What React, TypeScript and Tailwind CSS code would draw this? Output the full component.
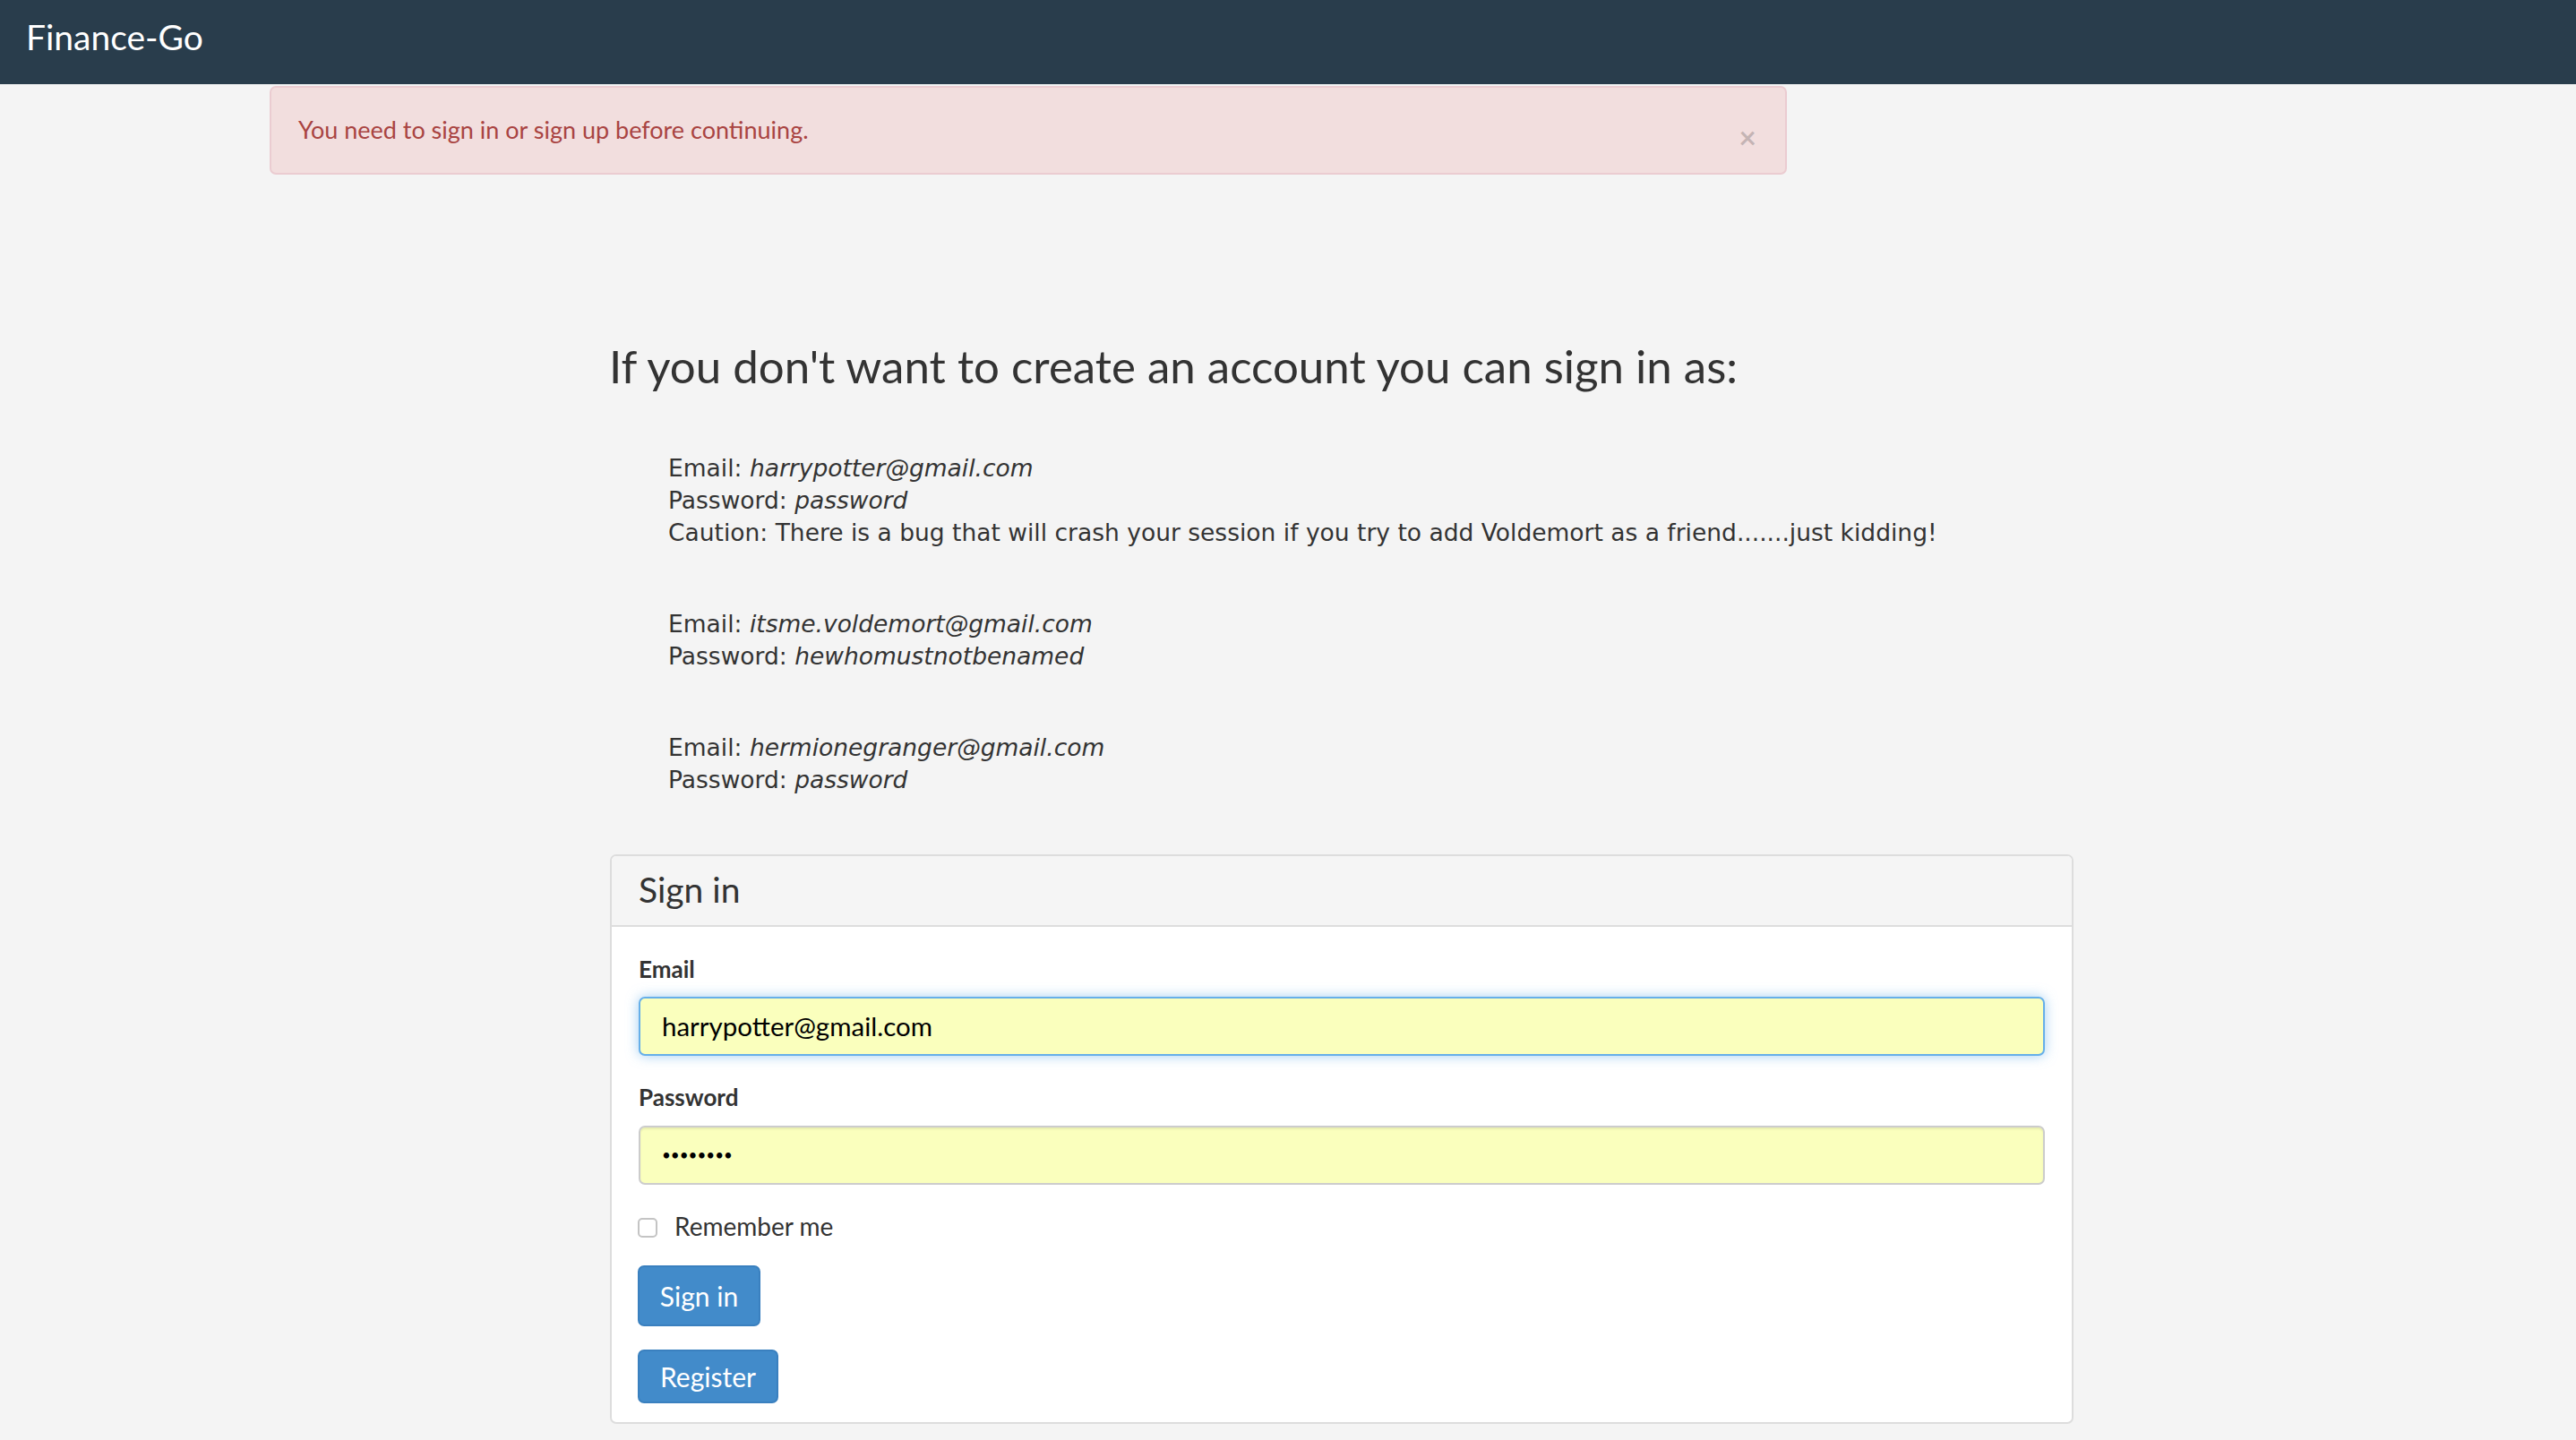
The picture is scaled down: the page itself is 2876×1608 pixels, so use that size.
import { useState } from "react";

const ACCOUNTS = [
  {
    email: "harrypotter@gmail.com",
    password: "password",
    note: "Caution: There is a bug that will crash your session if you try to add Voldemort as a friend.......just kidding!",
  },
  { email: "itsme.voldemort@gmail.com", password: "hewhomustnotbenamed" },
  { email: "hermionegranger@gmail.com", password: "password" },
];

export default function App() {
  const [showAlert, setShowAlert] = useState(true);
  const [remember, setRemember] = useState(false);

  return (
    <div className="min-h-screen bg-[#f4f4f4] font-[Lato,sans-serif] text-[#333]">
      {/* Navbar */}
      <nav className="h-[94px] bg-[#293d4c] pl-[29px] pt-[18px]">
        <a href="#" className="text-[39px] leading-[1.2] text-white">
          Finance-Go
        </a>
      </nav>

      {/* Flash */}
      {showAlert ? (
        <div className="ml-[301px] mt-[2px] flex h-[99px] w-[1694px] items-center justify-between rounded-[7px] border-2 border-[#ebccd1] bg-[#f2dede] pl-[30px] pr-[32px] text-[27px] leading-[36px] text-[#a94442]">
          <span className="mt-[-1px]">You need to sign in or sign up before continuing.</span>
          <button
            onClick={() => setShowAlert(false)}
            className="mt-[15px] text-[34px] font-bold leading-none text-black/20"
          >
            ×
          </button>
        </div>
      ) : (
        <div className="h-[101px]" />
      )}

      <div className="ml-[680px] w-[1635px]">
        <h2 className="mt-[186px] text-[51px] leading-[1.1]">
          If you don't want to create an account you can sign in as:
        </h2>

        {/* Demo accounts */}
        <div className="mt-[68px] pl-[66px] font-['DejaVu_Sans',sans-serif] text-[26.5px] leading-[36px] text-[#333]">
          {ACCOUNTS.map((a) => (
            <div key={a.email} className="mb-[66px] last:mb-0">
              <div>
                Email: <em>{a.email}</em>
              </div>
              <div>
                Password: <em>{a.password}</em>
              </div>
              {a.note && <div>{a.note}</div>}
            </div>
          ))}
        </div>

        {/* Sign in panel */}
        <div className="mt-[65px] ml-px w-[1634px] rounded-[7px] border-2 border-[#ddd] bg-white">
          <div className="rounded-t-[5px] border-b-2 border-[#ddd] bg-[#f5f5f5] px-[30px] pb-[16px] pt-[14px] text-[39px] leading-[1.2]">
            Sign in
          </div>
          <form
            className="px-[30px] pb-[21px] pt-[29px]"
            onSubmit={(e) => e.preventDefault()}
          >
            <label className="block text-[26px] font-bold leading-[36px]">Email</label>
            <input
              type="email"
              defaultValue="harrypotter@gmail.com"
              className="mt-[13px] block h-[66px] w-full rounded-[7px] border-2 border-[#66afe9] bg-[#faffbd] px-[24px] text-[29.5px] text-black shadow-[0_0_14px_rgba(102,175,233,0.6)] outline-none"
            />

            <label className="mt-[28px] block text-[26px] font-bold leading-[36px]">
              Password
            </label>
            <input
              type="password"
              defaultValue="password"
              className="mt-[14px] block h-[66px] w-full rounded-[7px] border-2 border-[#ccc] bg-[#faffbd] px-[24px] text-[17px] text-black shadow-[inset_0_2px_2px_rgba(0,0,0,0.075)] outline-none"
            />

            <label className="mt-[28px] flex h-[36px] items-center text-[28px] leading-[36px]">
              <input
                type="checkbox"
                checked={remember}
                onChange={(e) => setRemember(e.target.checked)}
                className="ml-[-1px] mt-[4px] h-[22px] w-[22px] appearance-none rounded-[5px] border-2 border-[#c4c4c4] bg-white checked:bg-[#428bca]"
              />
              <span className="ml-[19px]">Remember me</span>
            </label>

            <button
              type="submit"
              className="ml-[-1px] mt-[26px] block h-[68px] w-[137px] rounded-[7px] border-2 border-[#3a80bf] bg-[#428bca] text-[30px] leading-none text-white"
            >
              Sign in
            </button>
            <button
              type="button"
              className="ml-[-1px] mt-[26px] block h-[60px] w-[157px] rounded-[7px] border-2 border-[#3a80bf] bg-[#428bca] text-[30px] leading-none text-white"
            >
              Register
            </button>
          </form>
        </div>
      </div>
    </div>
  );
}
